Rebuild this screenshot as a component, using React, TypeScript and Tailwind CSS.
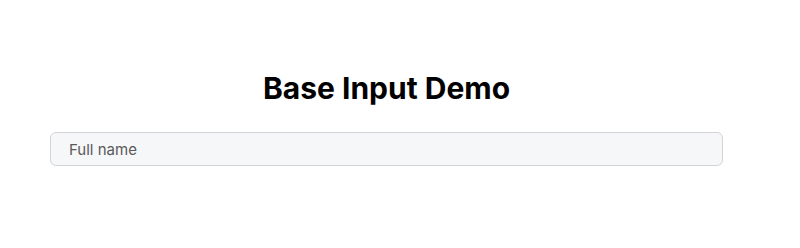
export default function App() {
  return (
    <div className="min-h-screen bg-white font-['Inter',sans-serif]">
      <div className="ml-[50px] w-[673px] pt-[67px] flex flex-col items-center gap-[23px]">
        <h1 className="text-[30px] leading-[42px] font-bold text-black">Base Input Demo</h1>
        <input
          type="text"
          placeholder="Full name"
          className="w-full h-[34px] px-[18px] rounded-[6px] border border-[#d4d4d8] bg-[#f6f7f8] text-[15px] text-black placeholder:text-[#595959] outline-none"
        />
      </div>
    </div>
  );
}
